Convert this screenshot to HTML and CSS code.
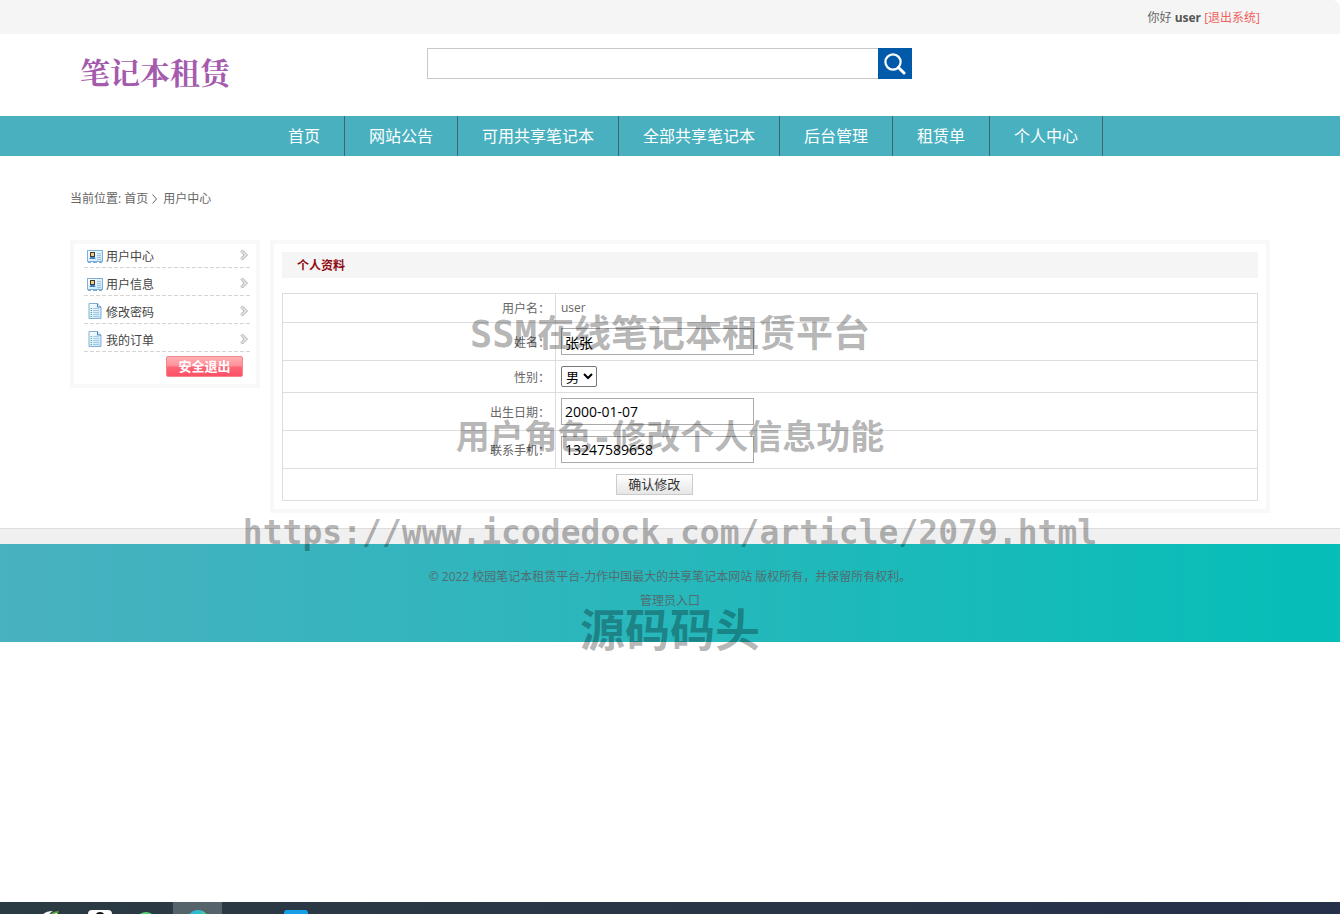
FILE: index.html
```html
<!DOCTYPE html>
<html lang="zh-CN">
<head>
<meta charset="utf-8">
<title>用户中心</title>
<link rel="stylesheet" href="styles.css">
</head>
<body>
<svg class="symbols" aria-hidden="true">
  <defs>
    <linearGradient id="paper" x1="0" y1="0" x2="1" y2="1"><stop offset="0" stop-color="#fff"/><stop offset="1" stop-color="#c3e2f5"/></linearGradient>
  </defs>
  <symbol id="card" viewBox="0 0 16 13">
    <rect x=".5" y=".5" width="15" height="11" fill="url(#paper)" stroke="#7fb0da"/>
    <path d="M1 12.5h3m2 0h4m2 0h3" stroke="#7aa9d2"/>
    <rect x="3" y="2" width="5" height="5" fill="#3b3b38"/>
    <rect x="4" y="3" width="3" height="3" fill="#f0c983"/>
    <path d="M2.500 9c0-3 6-3 6 0z" fill="#367fc0"/>
    <path d="M10 3.500h4m-4 2h4m-4 2h4m-4 2h4" stroke="#9cc5e4"/>
  </symbol>
  <symbol id="page" viewBox="0 0 13 16">
    <path d="M.5.500h8.500l3.500 3.500v11.500H.5z" fill="url(#paper)" stroke="#7fb0da"/>
    <path d="M9 .5V4h3.500" fill="#e9f5fd" stroke="#4681b5"/>
    <path d="M4.500 5.500h6m-6 2h6m-6 2h6m-6 2h6m-6 2h6" stroke="#a3cae6"/>
    <path d="M2 5.500h1.500M2 7.500h1.500M2 9.500h1.500M2 11.500h1.500M2 13.500h1.500" stroke="#67b38b"/>
  </symbol>
  <symbol id="arrow" viewBox="0 0 9 12">
    <path d="M1 2.500L2.500 1L7.500 6L2.500 11L1 9.500L4 6z" fill="#e6e6e6" stroke="#a8a8a8" stroke-width=".9"/>
  </symbol>
</svg>

<div class="topbar"><div class="wrap topbar-in">你好 <strong>user</strong> <a href="#">[退出系统]</a></div></div>

<header class="wrap header">
  <a class="logo" href="#">笔记本租赁</a>
  <form class="search">
    <input type="text" aria-label="搜索">
    <button type="button" aria-label="搜索"><svg width="22" height="22" viewBox="0 0 22 22" fill="none" stroke="#fff" stroke-width="2.200"><circle cx="9" cy="9" r="7.600"/><path d="M14.500 14.500L20 20" stroke-width="3" stroke-linecap="round"/></svg></button>
  </form>
</header>

<nav class="nav"><div class="wrap nav-in">
  <a href="#">首页</a><a href="#">网站公告</a><a href="#">可用共享笔记本</a><a href="#">全部共享笔记本</a><a href="#">后台管理</a><a href="#">租赁单</a><a href="#">个人中心</a>
</div></nav>

<div class="wrap crumbs">当前位置: <a href="#">首页</a><svg width="5" height="10" viewBox="0 0 5 10"><path d="M.5 .5L4.500 5L.5 9.500" fill="none" stroke="#666"/></svg>用户中心</div>

<div class="wrap content">
  <aside class="side">
    <ul>
      <li><a href="#"><svg class="ico" width="16" height="13"><use href="#card"/></svg>用户中心<svg class="arrow" width="9" height="12"><use href="#arrow"/></svg></a></li>
      <li><a href="#"><svg class="ico" width="16" height="13"><use href="#card"/></svg>用户信息<svg class="arrow" width="9" height="12"><use href="#arrow"/></svg></a></li>
      <li><a href="#"><svg class="ico tall" width="16" height="16"><use href="#page"/></svg>修改密码<svg class="arrow" width="9" height="12"><use href="#arrow"/></svg></a></li>
      <li><a href="#"><svg class="ico tall" width="16" height="16"><use href="#page"/></svg>我的订单<svg class="arrow" width="9" height="12"><use href="#arrow"/></svg></a></li>
    </ul>
    <button class="logout" type="button">安全退出</button>
  </aside>
  <main class="panel">
    <h1>个人资料</h1>
    <form>
      <table>
        <tr><th scope="row">用户名：</th><td>user</td></tr>
        <tr><th scope="row"><label for="name">姓名：</label></th><td><input id="name" type="text" value="张张"></td></tr>
        <tr><th scope="row"><label for="sex">性别：</label></th><td><select id="sex"><option>男</option><option>女</option></select></td></tr>
        <tr><th scope="row"><label for="birth">出生日期：</label></th><td><input id="birth" type="text" value="2000-01-07"></td></tr>
        <tr><th scope="row"><label for="tel">联系手机：</label></th><td><input id="tel" type="text" value="13247589658"></td></tr>
        <tr><td colspan="2"><button class="submit" type="button">确认修改</button></td></tr>
      </table>
    </form>
  </main>
</div>

<div class="strip"></div>
<footer class="footer">
  <p>© 2022 校园笔记本租赁平台-力作中国最大的共享笔记本网站 版权所有，并保留所有权利。</p>
  <p><a href="#">管理员入口</a></p>
</footer>

<div class="taskbar" aria-hidden="true">
  <span class="task"><svg width="24" height="8" viewBox="0 0 24 8"><path d="M2 8Q4 1 14 1Q10 3 9 8z" fill="#fff"/><path d="M9 8Q12 1 20 1L17 8z" fill="#58a53e"/><path d="M12 8Q14 3 18 3v5z" fill="#e8f4df"/></svg></span>
  <span class="task"><svg width="24" height="8" viewBox="0 0 24 8"><path d="M0 8V4Q0 0 4 0h16q4 0 4 4v4z" fill="#fff"/><path d="M7 8Q7 2 12 2T17 8z" fill="#111"/></svg></span>
  <span class="task"><svg width="24" height="8" viewBox="0 0 24 8"><ellipse cx="9" cy="8" rx="8" ry="6" fill="#53d477"/></svg></span>
  <span class="task active"><svg width="24" height="8" viewBox="0 0 24 8"><path d="M1 8Q5 0 12 0T23 8z" fill="#30b9d5"/><path d="M15 .4Q20 2 23 8h-6z" fill="#4cc98d"/></svg></span>
  <span class="task"></span>
  <span class="task"><svg width="24" height="8" viewBox="0 0 24 8"><path d="M0 8V3Q0 0 3 0h18q3 0 3 3v5z" fill="#199fe8"/></svg></span>
</div>

<div class="mark mark-title">SSM在线笔记本租赁平台</div>
<div class="mark mark-role">用户角色-修改个人信息功能</div>
<div class="mark mark-url">https://www.icodedock.com/article/2079.html</div>
<div class="mark mark-site">源码码头</div>
</body>
</html>
```
FILE: styles.css
```css
* { box-sizing: border-box; }
body {
  position: relative;
  display: flex;
  flex-direction: column;
  min-height: 100vh;
  margin: 0;
  background: #fff;
  color: #666;
  font: 12px/18px "Open Sans", "Noto Sans CJK SC", sans-serif;
}
a { color: inherit; text-decoration: none; }
p, ul, h1 { margin: 0; padding: 0; }
ul { list-style: none; }
button, input, select { font-family: inherit; }
.symbols { position: absolute; width: 0; height: 0; }
.wrap { width: 100%; max-width: 1200px; margin: 0 auto; }

.topbar { background: #f5f5f5; border-radius: 0 8px 0 0; }
.topbar-in { padding: 2px 10px 0 0; line-height: 32px; text-align: right; }
.topbar a { color: #f0625f; }
.topbar strong { color: #555; }

.header {
  display: grid;
  grid-template-columns: 1fr 486px 1fr;
  height: 82px;
  padding: 14px 0 0;
}
.logo {
  padding: 3px 0 0 10px;
  color: #a55bad;
  font: 700 30px/40px "Noto Serif CJK SC", "Noto Sans CJK SC", serif;
}
.search { display: flex; height: 31px; padding-right: 1px; }
.search input {
  flex: 1;
  min-width: 0;
  border: 1px solid #c8c8c8;
  border-right: 0;
  padding: 0 8px;
  font-size: 14px;
}
.search button {
  display: grid;
  place-items: center;
  width: 34px;
  padding: 0;
  border: 0;
  background: #0059a9;
}

.nav { background: #48b0bf; }
.nav-in { display: flex; padding-left: 194px; }
.nav a {
  padding: 0 24px;
  border-right: 1px solid #40666c;
  color: #fff;
  font-size: 16px;
  line-height: 40px;
  white-space: nowrap;
}

.crumbs { padding: 31px 0 29px; line-height: 24px; }
.crumbs svg { margin: 0 6px 0 4px; vertical-align: -1px; }

.content {
  display: grid;
  grid-template-columns: 190px 1fr;
  align-items: start;
  gap: 10px;
  margin-bottom: 15px;
}
.side { padding: 0 5px 7px 10px; border: 4px solid #f8f8f8; }
.side li {
  display: flex;
  align-items: flex-end;
  height: 28px;
  background: repeating-linear-gradient(90deg, #d5d5d5 0 4px, transparent 4px 6px) bottom / 100% 1px no-repeat;
}
.side li:first-child { height: 24px; }
.side li a {
  display: flex;
  align-items: center;
  width: 100%;
  padding: 0 2px 0 3px;
  color: #444;
  line-height: 22px;
}
.ico { margin: 0 3px 2px 0; }
.ico.tall { margin-bottom: 4px; }
.arrow { margin: 0 0 5px auto; }
.logout {
  display: block;
  width: 77px;
  height: 21px;
  margin: 4px 8px 0 auto;
  padding: 0;
  border: 1px solid #f3868f;
  border-radius: 2px;
  background: linear-gradient(#ffb2b4, #ff8d97 48%, #fc6677 52%, #ff5065);
  color: #fff;
  font-size: 13px;
  font-weight: 700;
  line-height: 19px;
}

.panel { padding: 8px; border: 4px solid #f8f8f8; }
.panel h1 {
  margin-bottom: 15px;
  padding: 2px 0 0 15px;
  background: #f5f5f5;
  color: #900b12;
  font-size: 12px;
  line-height: 24px;
}
table { width: 100%; border-collapse: collapse; }
th, td { height: 29px; padding: 5px; border: 1px solid #ddd; text-align: left; }
th { padding: 6px 5px 4px; width: 28%; font-weight: 400; text-align: right; }
td input {
  display: block;
  width: 193px;
  height: 27px;
  padding: 0 3px;
  border: 1px solid #aaa;
  color: #000;
  font-size: 14px;
}
select {
  display: block;
  width: 36px;
  height: 21px;
  padding: 0;
  border: 1px solid #767676;
  border-radius: 2px;
  background: #fff;
  color: #000;
  font-size: 13px;
}
.submit {
  display: block;
  width: 77px;
  height: 21px;
  margin-left: 34%;
  padding: 0;
  border: 1px solid #ccc;
  background: linear-gradient(#fff, #e6e6e6);
  color: #333;
  font-size: 13px;
  line-height: 19px;
}

.strip { height: 16px; border-top: 1px solid #ddd; background: #f0f0f0; }
.footer {
  padding: 21px 0 29px;
  background: linear-gradient(90deg, #49b1c0, #05beb7);
  color: #526d70;
  line-height: 24px;
  text-align: center;
}

.taskbar {
  display: flex;
  height: 12px;
  margin-top: auto;
  padding-left: 26px;
  overflow: hidden;
  background: linear-gradient(90deg, #2b3b43, #26304a);
}
.task { display: flex; justify-content: center; width: 49px; padding-top: 8px; }
.task svg { flex: none; }
.task.active { background: #55646b; }

.mark {
  position: absolute;
  left: 0;
  right: 0;
  color: rgba(0, 0, 0, .3);
  font-family: "DejaVu Sans Mono", "Noto Sans CJK SC", monospace;
  font-weight: 700;
  text-align: center;
  white-space: nowrap;
  pointer-events: none;
}
.mark-title { top: 310px; font-size: 37px; line-height: 50px; }
.mark-role { top: 412px; font-size: 34px; line-height: 50px; }
.mark-url { top: 508px; font-size: 33px; line-height: 50px; }
.mark-site { top: 602px; font-size: 45px; line-height: 60px; }
```
